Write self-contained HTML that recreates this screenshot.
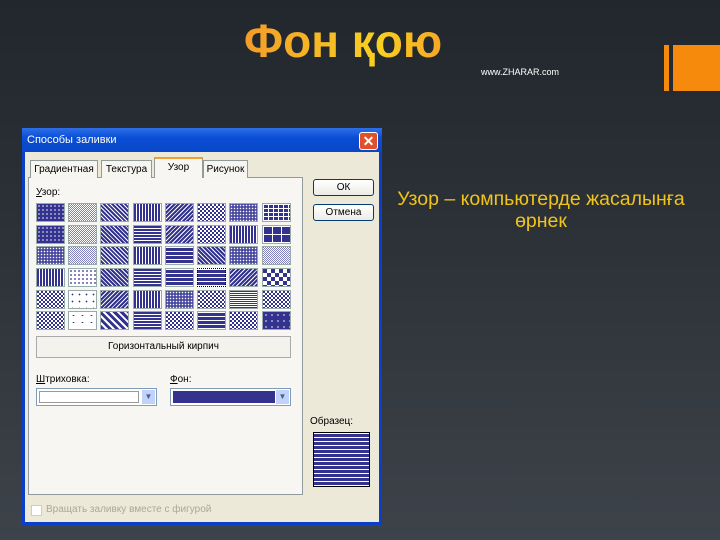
<!DOCTYPE html><html><head><meta charset="utf-8"><style>
*{margin:0;padding:0;box-sizing:border-box}
body{width:720px;height:540px;overflow:hidden;position:relative;background:linear-gradient(#22272d 0%,#2c3238 45%,#3d434a 100%);font-family:"Liberation Sans",sans-serif}
.a{position:absolute}
.title{left:0;width:686px;text-align:center;top:14px;font-size:46px;font-weight:bold;background:linear-gradient(90deg,#f39a2a 35%,#f8d020 55%,#f7a525 65%);-webkit-background-clip:text;background-clip:text;color:transparent}
.dlg{left:22px;top:128px;width:360px;height:397px;background:#ece9d8;border:3px solid #0b3fc8;border-top:none}
.tb{left:22px;top:128px;width:360px;height:24px;background:linear-gradient(#2d6fe8,#0a4ed6 40%,#0847c8);color:#fff;font-size:11px;padding:6px 0 0 5px}
.x{left:359px;top:132px;width:19px;height:18px;background:#e0502a;border:1px solid #fff;border-radius:3px;color:#fff;font-size:14px;text-align:center;line-height:16px;font-weight:bold}
.tab{top:160px;height:18px;background:#f6f5ef;border:1px solid #919b9c;border-bottom:none;font-size:10px;text-align:center;padding-top:3px;color:#000}
.panel{left:28px;top:177px;width:275px;height:318px;background:#f7f6f2;border:1px solid #919b9c}
.btn{left:313px;width:61px;height:17px;border:1px solid #003c74;border-radius:3px;background:linear-gradient(#fff,#ecebe6);font-size:10px;text-align:center;line-height:15px}
.c{position:absolute;width:29px;height:19px;border:1px solid #9aa;background-color:#33338f}
.p1{background-image:radial-gradient(#fff 0.6px,transparent 0.9px);background-size:4px 4px}
.p2{background-image:repeating-linear-gradient(45deg,#fff 0 1px,#33338f 1px 3px);}
.p3{background-image:repeating-linear-gradient(45deg,#33338f 0 2px,#fff 2px 3px)}
.p4{background-image:repeating-linear-gradient(90deg,#33338f 0 2px,#fff 2px 3px)}
.p5{background-image:repeating-linear-gradient(0deg,#33338f 0 2px,#fff 2px 3px)}
.p6{background-image:repeating-linear-gradient(-45deg,#33338f 0 2px,#fff 2px 3px)}
.p7{background-image:linear-gradient(90deg,#fff 1px,transparent 1px),linear-gradient(#fff 1px,transparent 1px);background-size:5px 4px}
.p8{background-color:#8080c0;background-image:linear-gradient(45deg,#fff 25%,transparent 25%,transparent 75%,#fff 75%),linear-gradient(45deg,#fff 25%,transparent 25%,transparent 75%,#fff 75%);background-size:2px 2px;background-position:0 0,1px 1px}
.p8b{background-color:#fff;background-image:radial-gradient(#33338f 0.7px,transparent 1px);background-size:4px 4px}
.p9{background-image:linear-gradient(45deg,#fff 25%,transparent 25%,transparent 75%,#fff 75%),linear-gradient(45deg,#fff 25%,transparent 25%,transparent 75%,#fff 75%);background-size:4px 4px;background-position:0 0,2px 2px;background-color:#33338f}
.p9b{background-image:linear-gradient(45deg,#fff 25%,transparent 25%,transparent 75%,#fff 75%),linear-gradient(45deg,#fff 25%,transparent 25%,transparent 75%,#fff 75%);background-size:8px 8px;background-position:0 0,4px 4px}
.p10{background-color:#4a4aa0;background-image:radial-gradient(#fff 0.6px,transparent 0.9px);background-size:3px 3px}
.p11{background-image:repeating-linear-gradient(45deg,#33338f 0 3px,#fff 3px 5px)}
.p12{background-image:repeating-linear-gradient(0deg,#fff 0 1px,#33338f 1px 4px),repeating-linear-gradient(90deg,transparent 0 5px,#fff 5px 6px)}
.lbl{font-size:10px;color:#000}
.cmb{height:18px;border:1px solid #7f9db9;background:#fff}
.arr{position:absolute;right:1px;top:1px;width:13px;height:14px;background:#c1d3fb;color:#4d6185;font-size:8px;text-align:center;line-height:14px}
</style></head><body>
<div class="a title">Фон қою</div>
<div class="a" style="left:481px;top:67px;font-size:9px;color:#fff">www.ZHARAR.com</div>
<div class="a" style="left:664px;top:45px;width:5px;height:46px;background:#f68a0c"></div>
<div class="a" style="left:673px;top:45px;width:47px;height:46px;background:#f68a0c"></div>
<div class="a" style="left:380px;top:188px;width:322px;text-align:center;font-size:19.5px;line-height:22px;color:#f0c419;white-space:nowrap">Узор – компьютерде жасалынға<br>өрнек</div>

<div class="a dlg"></div>
<div class="a tb">Способы заливки</div>
<div class="a x">✕</div>
<div class="a panel"></div>
<div class="a tab" style="left:30px;width:68px">Градиентная</div>
<div class="a tab" style="left:101px;width:51px">Текстура</div>
<div class="a tab" style="left:154px;width:49px;top:157px;height:21px;border-top:2px solid #f0a030;background:#f7f6f2">Узор</div>
<div class="a tab" style="left:203px;width:45px">Рисунок</div>
<div class="a lbl" style="left:36px;top:187px"><u>У</u>зор:</div>
<div class="a" style="left:0;top:0">
<div class="c p1" style="left:36px;top:203px"></div><div class="c p8" style="left:68px;top:203px"></div><div class="c p2" style="left:100px;top:203px"></div><div class="c p4" style="left:133px;top:203px"></div><div class="c p6" style="left:165px;top:203px"></div><div class="c p9" style="left:197px;top:203px"></div><div class="c p10" style="left:229px;top:203px"></div><div class="c p7" style="left:262px;top:203px"></div>
<div class="c p1" style="left:36px;top:225px"></div><div class="c p8" style="left:68px;top:225px"></div><div class="c p3" style="left:100px;top:225px"></div><div class="c p5" style="left:133px;top:225px"></div><div class="c p6" style="left:165px;top:225px"></div><div class="c p9" style="left:197px;top:225px"></div><div class="c p4" style="left:229px;top:225px"></div><div class="c p7" style="left:262px;top:225px;background-size:9px 8px"></div>
<div class="c p10" style="left:36px;top:246px"></div><div class="c p8" style="left:68px;top:246px"></div><div class="c p2" style="left:100px;top:246px"></div><div class="c p4" style="left:133px;top:246px"></div><div class="c p12" style="left:165px;top:246px"></div><div class="c p3" style="left:197px;top:246px"></div><div class="c p10" style="left:229px;top:246px"></div><div class="c p8" style="left:262px;top:246px"></div>
<div class="c p4" style="left:36px;top:268px"></div><div class="c p8b" style="left:68px;top:268px"></div><div class="c p3" style="left:100px;top:268px"></div><div class="c p5" style="left:133px;top:268px"></div><div class="c p12" style="left:165px;top:268px"></div><div class="c p12" style="left:197px;top:268px;border:1px dotted #000"></div><div class="c p6" style="left:229px;top:268px"></div><div class="c p9b" style="left:262px;top:268px"></div>
<div class="c p9" style="left:36px;top:290px"></div><div class="c p8b" style="left:68px;top:290px;background-size:7px 7px"></div><div class="c p6" style="left:100px;top:290px"></div><div class="c p4" style="left:133px;top:290px"></div><div class="c p10" style="left:165px;top:290px"></div><div class="c p9" style="left:197px;top:290px"></div><div class="c p5" style="left:229px;top:290px;background-image:repeating-linear-gradient(0deg,#33338f 0 1px,#fff 1px 2px)"></div><div class="c p9" style="left:262px;top:290px"></div>
<div class="c p9" style="left:36px;top:311px"></div><div class="c p8b" style="left:68px;top:311px;background-size:9px 7px"></div><div class="c p11" style="left:100px;top:311px"></div><div class="c p5" style="left:133px;top:311px"></div><div class="c p9" style="left:165px;top:311px"></div><div class="c p12" style="left:197px;top:311px"></div><div class="c p9" style="left:229px;top:311px"></div><div class="c p1" style="left:262px;top:311px;background-size:6px 6px"></div>
</div>
<div class="a" style="left:36px;top:336px;width:255px;height:22px;border:1px solid #aaa;background:#f3f2ec;font-size:10px;text-align:center;line-height:20px">Горизонтальный кирпич</div>
<div class="a lbl" style="left:36px;top:374px"><u>Ш</u>триховка:</div>
<div class="a lbl" style="left:170px;top:374px"><u>Ф</u>он:</div>
<div class="a cmb" style="left:36px;top:388px;width:121px"><div class="a" style="left:2px;top:2px;width:100px;height:12px;border:1px solid #999"></div><div class="arr">▼</div></div>
<div class="a cmb" style="left:170px;top:388px;width:121px"><div class="a" style="left:2px;top:2px;width:102px;height:12px;background:#33338f"></div><div class="arr">▼</div></div>
<div class="a btn" style="top:179px">ОК</div>
<div class="a btn" style="top:204px">Отмена</div>
<div class="a lbl" style="left:310px;top:416px">Образец:</div>
<div class="a c p12" style="left:313px;top:432px;width:57px;height:55px;border:1px solid #000"></div>
<div class="a" style="left:31px;top:505px;width:11px;height:11px;background:#fff;border:1px solid #ccc"></div>
<div class="a" style="left:46px;top:504px;font-size:10px;color:#aca899">Вращать заливку вместе с фигурой</div>
</body></html>
